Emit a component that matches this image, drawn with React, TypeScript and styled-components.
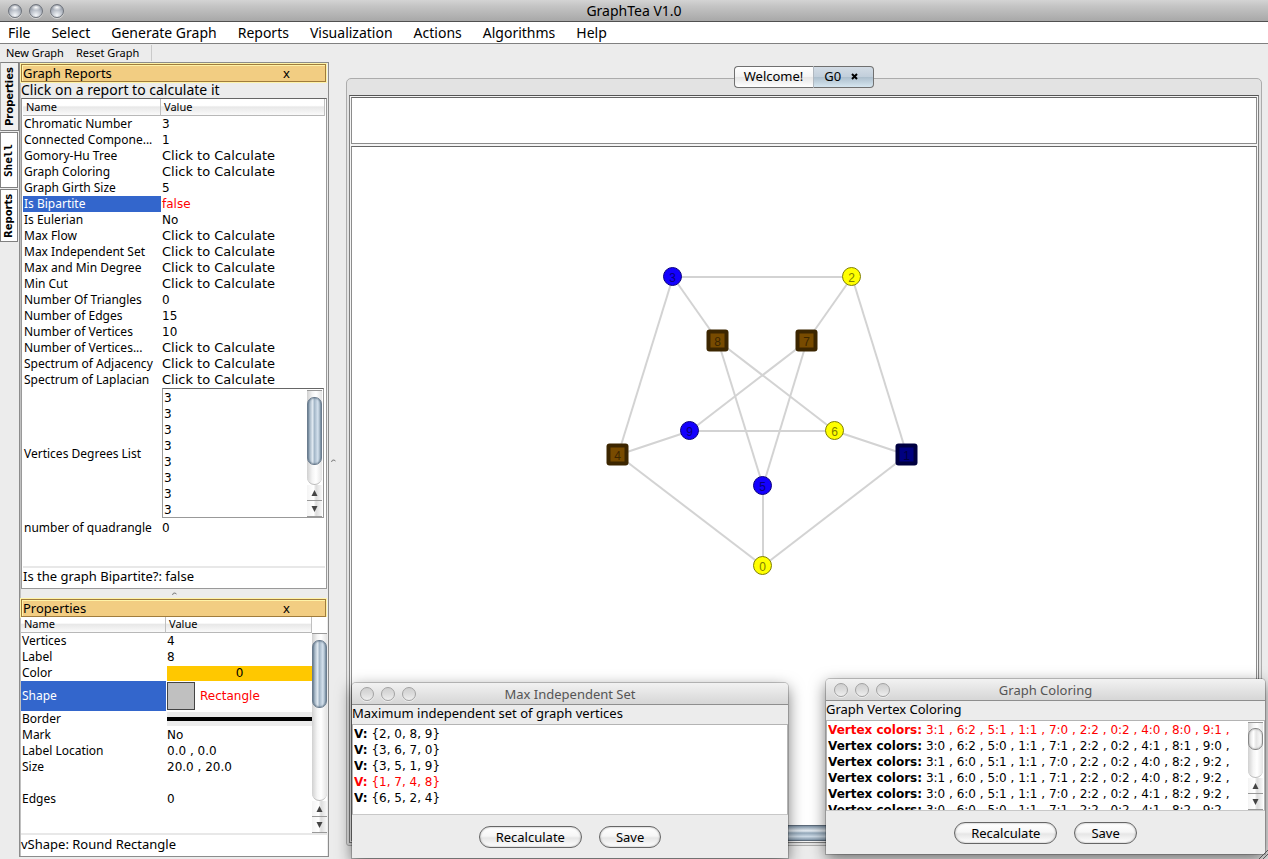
import React from "react";
import styled, { createGlobalStyle, css } from "styled-components";

const GlobalStyle = createGlobalStyle`
  * { box-sizing: border-box; }
  html, body { margin: 0; padding: 0; }
  body {
    background: #ececec;
    color: #000;
    font-family: "Noto Sans", "Open Sans", sans-serif;
    font-size: 13px;
    line-height: 16px;
  }
  button { font-family: inherit; color: inherit; margin: 0; padding: 0; border: 0; background: none; }
  ul { list-style: none; margin: 0; padding: 0; }
`;

const Window = styled.div`
  position: relative;
  display: flex;
  flex-direction: column;
  min-height: 100vh;
  overflow: hidden;
  background: #ececec;
`;

/* ---------- window chrome ---------- */

const TitleBar = styled.header`
  display: grid;
  grid-template-columns: 72px 1fr 80px;
  align-items: center;
  height: 22px;
  padding: 0 0 0 8px;
  border-bottom: 1px solid #505050;
  background: linear-gradient(#d4d4d4, #c4c4c4 30%, #a8a8a8);
`;

const WindowTitle = styled.h1`
  margin: 0;
  font-size: 14px;
  font-weight: 400;
  text-align: center;
`;

const Lights = styled.div`
  display: flex;
  gap: 7px;
`;

const Light = styled.button<{ $dim?: boolean }>`
  width: 14px;
  height: 14px;
  border-radius: 50%;
  border: 1px solid ${(p) => (p.$dim ? "#a2a2a2" : "#6f747c")};
  background: ${(p) =>
    p.$dim
      ? "linear-gradient(#cfcfcf, #dcdcdc 50%, #efefef)"
      : "radial-gradient(ellipse 5px 3px at 50% 20%, #fff, rgba(255,255,255,0) 100%), radial-gradient(circle at 50% 85%, #f4f7fa 0, #b4bac4 50%, #747b88 100%)"};
  box-shadow: 0 1px 0 rgba(255, 255, 255, 0.5);
`;

const MenuBar = styled.nav`
  display: flex;
  align-items: center;
  gap: 21px;
  height: 22px;
  padding: 0 8px;
  border-bottom: 1px solid #808080;
  background: #fff;
`;

const MenuItem = styled.button`
  font-size: 14px;
  line-height: 20px;
`;

const ToolBar = styled.div`
  display: flex;
  align-items: center;
  gap: 12px;
  height: 18px;
  padding-left: 6px;
`;

const ToolButton = styled.button`
  font-size: 11px;
  line-height: 16px;
`;

const ToolDivider = styled.span`
  width: 1px;
  height: 16px;
  background: #cacaca;
`;

const Body = styled.div`
  flex: 1;
  display: flex;
`;

/* ---------- left side ---------- */

const SideTabs = styled.div`
  flex: none;
  width: 19px;
  display: flex;
  flex-direction: column;
  align-items: flex-start;
  gap: 1px;
`;

const SideTab = styled.button<{ $size: number; $open?: boolean; $mono?: boolean }>`
  width: ${(p) => (p.$open ? 19 : 18)}px;
  height: ${(p) => p.$size}px;
  border: 1px solid #808080;
  border-right-color: ${(p) => (p.$open ? "#aaa" : "#808080")};
  background: ${(p) => (p.$open ? "#f0f0f0" : "#fff")};
  writing-mode: vertical-rl;
  transform: rotate(180deg);
  font-family: ${(p) => (p.$mono ? '"DejaVu Sans Mono", monospace' : '"DejaVu Sans", sans-serif')};
  font-size: ${(p) => (p.$mono ? 11 : 10)}px;
  line-height: 16px;
  font-weight: 700;
`;

const Sidebar = styled.aside`
  flex: none;
  width: 310px;
  margin-bottom: 2px;
  display: flex;
  flex-direction: column;
  border: 1px solid #8c8c8c;
  box-shadow: inset 1px 0 0 #c0c0c0;
  padding: 0 1px;
`;

const PanelHeader = styled.div`
  display: flex;
  justify-content: space-between;
  align-items: center;
  height: 18px;
  padding: 0 35px 0 1px;
  border: 1px solid #a07c3c;
  box-shadow: 0 0 0 1px #fff3a8, inset 1px 1px 0 #fff3a8;
  background: #f2cd82;
  margin: 1px 1px 0 0;
`;

const PanelTitle = styled.h2`
  margin: 0;
  font-size: 13px;
  font-weight: 400;
`;

const CloseButton = styled.button`
  font-size: 13px;
  line-height: 14px;
`;

const Hint = styled.p`
  margin: 0;
  height: 16px;
  font-size: 14px;
  line-height: 16px;
`;

const ReportBox = styled.div`
  display: flex;
  flex-direction: column;
  padding: 0 1px;
  border: 1px solid #999;
  border-top-color: #666;
  background: #fff;
`;

const Grid = styled.table`
  width: 100%;
  table-layout: fixed;
  border-collapse: separate;
  border-spacing: 0;
`;

const HeadCell = styled.th<{ $width?: number; $tall?: boolean }>`
  width: ${(p) => (p.$width ? p.$width + "px" : "auto")};
  height: ${(p) => (p.$tall ? 17 : 16)}px;
  padding: 0 0 1px 3px;
  border-right: 1px solid #c0c0c0;
  border-bottom: 1px solid #b8b8b8;
  background: linear-gradient(#fff 0, #fff 40%, #e8e8e8 50%, #fafafa 100%);
  font-size: 11px;
  line-height: 14px;
  font-weight: 400;
  text-align: left;
`;

const NameCell = styled.th<{ $selected?: boolean }>`
  height: 16px;
  padding: 0 0 0 1px;
  overflow: hidden;
  white-space: nowrap;
  font-size: 12px;
  font-weight: 400;
  line-height: 16px;
  text-align: left;
  ${(p) => p.$selected && css`background: #3366cc; color: #fff;`}
`;

const ValueCell = styled.td<{ $alert?: boolean; $action?: boolean }>`
  height: 16px;
  padding: 0 0 0 1px;
  font-family: "DejaVu Sans", sans-serif;
  font-size: ${(p) => (p.$action ? 13 : 12)}px;
  line-height: 16px;
  color: ${(p) => (p.$alert ? "#f00" : "inherit")};
`;

const StatusLine = styled.p`
  margin: 0;
  padding: 0;
  border-top: 2px solid #e8e8e8;
  height: 22px;
  font-size: 13px;
  line-height: 16px;
`;

const Spacer = styled.div<{ $size: number }>`
  height: ${(p) => p.$size}px;
`;

const DegreeBox = styled.div`
  display: flex;
  height: 130px;
  margin-right: 1px;
  margin-bottom: 2px;
  border: 1px solid #999;
  border-top-color: #666;
  padding: 1px 1px 0 1px;
`;

const DegreeList = styled.ul`
  flex: 1;
`;

const Splitter = styled.div`
  display: flex;
  justify-content: center;
  align-items: center;
  height: 9px;
`;

const PropertyTable = styled.div`
  display: flex;
  height: 216px;
  background: #fff;
`;

const PropertyColumn = styled.div`
  flex: 1;
`;

const BarColumn = styled.div`
  display: flex;
  padding-top: 16px;
`;

const Swatch = styled.div`
  height: 15px;
  line-height: 15px;
  background: #ffc800;
  text-align: center;
`;

const ShapeValue = styled.div`
  display: flex;
  align-items: center;
  gap: 5px;
  height: 30px;
`;

const ShapeChip = styled.span`
  width: 28px;
  height: 28px;
  border: 1px solid #444;
  background: #c0c0c0;
`;

const Stroke = styled.div`
  height: 14px;
  border: solid #ececec;
  border-width: 5px 0;
  background: #000;
`;

const PropertyStatus = styled(StatusLine)`
  flex: 1;
  background: #fff;
  padding: 1px 0 0;
`;

/* ---------- scroll bars ---------- */

const Bar = styled.div`
  flex: none;
  width: 15px;
  display: flex;
  flex-direction: column;
  border-top: 1px solid #999;
  background: #fff;
`;

const Track = styled.div<{ $offset: number }>`
  flex: 1;
  min-height: 0;
  padding-top: ${(p) => p.$offset}px;
  border-radius: 0 0 8px 8px;
  border-bottom: 1px solid #bbb;
  background: linear-gradient(90deg, #d0d0d0, #f4f4f4 35%, #fff 60%, #e4e4e4);
`;

const Thumb = styled.div<{ $size: number; $gray?: boolean }>`
  height: ${(p) => p.$size}px;
  border: 1px solid ${(p) => (p.$gray ? "#888" : "#6b7c8e")};
  border-radius: 7px;
  box-shadow: inset 0 0 2px ${(p) => (p.$gray ? "#999" : "#3f5468")};
  background: ${(p) =>
    p.$gray
      ? "linear-gradient(90deg, #ddd, #fff 35%, #e4e4e4 55%, #fff)"
      : "linear-gradient(90deg, #8298ab, #dfe8f0 35%, #a5b8c9 50%, #d3e0ec 75%, #8fa4b6)"};
`;

const Arrow = styled.button`
  display: flex;
  align-items: center;
  justify-content: center;
  height: 16px;
  border-bottom: 1px solid #999;
  background: linear-gradient(90deg, #f4f4f4, #fff 45%, #dcdcdc 60%, #f8f8f8);
`;

function ScrollBar({ offset, size, gray }: { offset: number; size: number; gray?: boolean }) {
  return (
    <Bar>
      <Track $offset={offset}>
        <Thumb $size={size} $gray={gray} />
      </Track>
      <Arrow aria-label="Scroll up">
        <svg width="7" height="6"><path d="M3.5 0 L6.5 6 H0.5 Z" fill="#444" /></svg>
      </Arrow>
      <Arrow aria-label="Scroll down">
        <svg width="7" height="6"><path d="M3.5 6 L6.5 0 H0.5 Z" fill="#444" /></svg>
      </Arrow>
    </Bar>
  );
}

/* ---------- right side ---------- */

const Gutter = styled.div`
  flex: none;
  width: 17px;
  display: flex;
  align-items: center;
  padding-left: 2px;
`;

const Workspace = styled.main`
  flex: 1;
  display: flex;
  flex-direction: column;
  margin: 4px 6px 13px 0;
`;

const TabRow = styled.div`
  z-index: 1;
  display: flex;
  justify-content: center;
  height: 22px;
  margin-bottom: -10px;
`;

const DocTab = styled.button<{ $active?: boolean }>`
  display: flex;
  align-items: center;
  gap: 10px;
  height: 22px;
  padding: ${(p) => (p.$active ? "0 15px 2px 10px" : "0 10px 2px 9px")};
  border: 1px solid #707070;
  font-size: 13px;
  line-height: 18px;
  ${(p) =>
    p.$active
      ? css`
          border-left: 1px solid #b0b8c0;
          border-radius: 0 4px 4px 0;
          background: linear-gradient(#d3dce5, #c2cfdb 48%, #adbfcd 52%, #d6e6f0);
        `
      : css`
          border-right: 0;
          border-radius: 4px 0 0 4px;
          background: linear-gradient(#fff, #f4f4f4 48%, #e6e6e6 52%, #fff);
        `}
`;

const Frame = styled.section`
  flex: 1;
  display: flex;
  flex-direction: column;
  padding: 16px 2px 2px;
  border: 1px solid #acacac;
  border-radius: 5px 5px 3px 3px;
  background: #e3e3e3;
`;

const InnerFrame = styled.div`
  flex: 1;
  display: flex;
  flex-direction: column;
  gap: 2px;
  padding: 1px;
  border: 1px solid #808080;
  border-top-color: #555;
  background: #f4f4f4;
`;

const NoteBox = styled.div`
  height: 47px;
  border: 1px solid #8c8c8c;
  border-top-color: #666;
  background: #fff;
`;

const CanvasBox = styled.div`
  flex: 1;
  display: flex;
  flex-direction: column;
  border: 1px solid #8c8c8c;
  border-top-color: #666;
  border-bottom: 0;
  background: #fff;
`;

const Drawing = styled.svg`
  display: block;
  flex: 1;
  width: 100%;
  font-family: "Liberation Sans", sans-serif;
  font-size: 12px;
`;

const HorizontalThumb = styled.div`
  height: 16px;
  border: 1px solid #5d6b7a;
  background: linear-gradient(#7c90a3, #e6edf3 35%, #93a8ba 50%, #cbd9e5 75%, #7f94a7);
`;

/* ---------- result windows ---------- */

const Dialog = styled.section<{ $left: number; $top: number; $width: number }>`
  position: absolute;
  left: ${(p) => p.$left}px;
  top: ${(p) => p.$top}px;
  width: ${(p) => p.$width}px;
  display: flex;
  flex-direction: column;
  background: #ececec;
  border-radius: 4px 4px 0 0;
  box-shadow: 0 0 0 1px rgba(0, 0, 0, 0.2), 0 5px 16px rgba(0, 0, 0, 0.55);
`;

const DialogBar = styled.header`
  display: grid;
  grid-template-columns: 62px 1fr 70px;
  align-items: center;
  height: 22px;
  padding-left: 8px;
  border-bottom: 1px solid #8e8e8e;
  border-radius: 4px 4px 0 0;
  background: linear-gradient(#f2f2f2, #d6d6d6);
`;

const DialogTitle = styled.h2`
  margin: 0;
  font-size: 13px;
  font-weight: 400;
  text-align: center;
  color: #555;
`;

const Caption = styled.p`
  margin: 0;
  height: 19px;
  font-size: 13px;
  line-height: 17px;
`;

const ResultBox = styled.div`
  display: flex;
  height: 91px;
  padding: 1px 1px 0 1px;
  border: 1px solid #b4b4b4;
  border-bottom-color: #c8c8c8;
  background: #fff;
  overflow: hidden;
`;

const ResultList = styled.ul`
  flex: 1;
  min-width: 0;
  height: 88px;
  overflow: hidden;
`;

const Result = styled.li<{ $alert?: boolean }>`
  height: 16px;
  font-family: "DejaVu Sans", sans-serif;
  font-size: 12px;
  line-height: 16px;
  white-space: nowrap;
  color: ${(p) => (p.$alert ? "#f00" : "inherit")};
`;

const DialogFooter = styled.footer`
  display: flex;
  justify-content: center;
  gap: 17px;
  padding: 11px 0 10px;
`;

const PillButton = styled.button`
  height: 22px;
  padding: 0 16px;
  border: 1px solid #666;
  border-radius: 11px;
  background: linear-gradient(#fff, #f6f6f6 45%, #e6e6e6 55%, #fff);
  box-shadow: inset 0 0 2px #999;
  font-size: 13px;
  line-height: 18px;
`;

const Grip = styled.svg`
  position: absolute;
  right: 0;
  bottom: 0;
`;

/* ---------- data ---------- */

const CALC = "Click to Calculate";
const reports: [string, string][] = [
  ["Chromatic Number", "3"],
  ["Connected Compone...", "1"],
  ["Gomory-Hu Tree", CALC],
  ["Graph Coloring", CALC],
  ["Graph Girth Size", "5"],
  ["Is Bipartite", "false"],
  ["Is Eulerian", "No"],
  ["Max Flow", CALC],
  ["Max Independent Set", CALC],
  ["Max and Min Degree", CALC],
  ["Min Cut", CALC],
  ["Number Of Triangles", "0"],
  ["Number of Edges", "15"],
  ["Number of Vertices", "10"],
  ["Number of Vertices...", CALC],
  ["Spectrum of Adjacency", CALC],
  ["Spectrum of Laplacian", CALC],
];

type Kind = "blue" | "yellow" | "brown" | "navy";
const vertices: { x: number; y: number; kind: Kind }[] = [
  { x: 411, y: 419, kind: "yellow" },
  { x: 555, y: 308, kind: "navy" },
  { x: 500, y: 130, kind: "yellow" },
  { x: 321, y: 130, kind: "blue" },
  { x: 266, y: 308, kind: "brown" },
  { x: 411, y: 339, kind: "blue" },
  { x: 483, y: 284, kind: "yellow" },
  { x: 455, y: 194, kind: "brown" },
  { x: 366, y: 194, kind: "brown" },
  { x: 338, y: 284, kind: "blue" },
];

const edges = [
  [3, 2], [3, 4], [2, 1], [4, 0], [1, 0], [3, 8], [2, 7], [4, 9],
  [1, 6], [0, 5], [8, 5], [8, 6], [7, 9], [7, 5], [9, 6],
];

const paint: Record<Kind, { fill: string; line: string; ink: string }> = {
  blue: { fill: "#1400ff", line: "#0a0080", ink: "#0a0080" },
  yellow: { fill: "#ffff00", line: "#808000", ink: "#808000" },
  brown: { fill: "#784b00", line: "#3c2600", ink: "#3c2600" },
  navy: { fill: "#000080", line: "#000040", ink: "#000040" },
};

const colorings = [
  "3:1 , 6:2 , 5:1 , 1:1 , 7:0 , 2:2 , 0:2 , 4:0 , 8:0 , 9:1 ,",
  "3:0 , 6:2 , 5:0 , 1:1 , 7:1 , 2:2 , 0:2 , 4:1 , 8:1 , 9:0 ,",
  "3:1 , 6:0 , 5:1 , 1:1 , 7:0 , 2:2 , 0:2 , 4:0 , 8:2 , 9:2 ,",
  "3:1 , 6:0 , 5:0 , 1:1 , 7:1 , 2:2 , 0:2 , 4:0 , 8:2 , 9:2 ,",
  "3:0 , 6:0 , 5:1 , 1:1 , 7:0 , 2:2 , 0:2 , 4:1 , 8:2 , 9:2 ,",
  "3:0 , 6:0 , 5:0 , 1:1 , 7:1 , 2:2 , 0:2 , 4:1 , 8:2 , 9:2 ,",
];

const independentSets = ["{2, 0, 8, 9}", "{3, 6, 7, 0}", "{3, 5, 1, 9}", "{1, 7, 4, 8}", "{6, 5, 2, 4}"];

/* ---------- parts ---------- */

function TrafficLights({ dim }: { dim?: boolean }) {
  return (
    <Lights>
      <Light $dim={dim} aria-label="Close" />
      <Light $dim={dim} aria-label="Minimize" />
      <Light $dim={dim} aria-label="Zoom" />
    </Lights>
  );
}

function Dimple() {
  return (
    <svg width="5" height="4" aria-hidden="true">
      <path d="M0.5 3 Q1 0.5 3 1 L4.5 2" fill="none" stroke="#777" />
    </svg>
  );
}

function GraphDrawing() {
  return (
    <Drawing role="img" aria-label="Petersen graph">
      {edges.map(([a, b]) => (
        <line
          key={`${a}-${b}`}
          x1={vertices[a].x}
          y1={vertices[a].y}
          x2={vertices[b].x}
          y2={vertices[b].y}
          stroke="#d3d3d3"
          strokeWidth="2"
        />
      ))}
      {vertices.map(({ x, y, kind }, i) => {
        const c = paint[kind];
        const round = kind === "blue" || kind === "yellow";
        return (
          <g key={i}>
            {round ? (
              <circle cx={x - 0.5} cy={y - 0.5} r="9" fill={c.fill} stroke={c.line} />
            ) : (
              <>
                <rect x={x - 11.5} y={y - 11.5} width="22" height="22" rx="3" fill={c.line} />
                <rect x={x - 7.5} y={y - 7.5} width="14" height="14" fill={c.fill} />
              </>
            )}
            <text x={x - 0.5} y={y + 5} textAnchor="middle" fill={c.ink}>{i}</text>
          </g>
        );
      })}
    </Drawing>
  );
}

function ReportsPanel() {
  return (
    <>
      <PanelHeader>
        <PanelTitle>Graph Reports</PanelTitle>
        <CloseButton aria-label="Close Graph Reports">x</CloseButton>
      </PanelHeader>
      <Hint>Click on a report to calculate it</Hint>
      <ReportBox>
        <Grid>
          <thead>
            <tr>
              <HeadCell $tall $width={138}>Name</HeadCell>
              <HeadCell $tall>Value</HeadCell>
            </tr>
          </thead>
          <tbody>
            {reports.map(([name, value]) => (
              <tr key={name}>
                <NameCell scope="row" $selected={name === "Is Bipartite"}>{name}</NameCell>
                <ValueCell $action={value === CALC} $alert={value === "false"}>{value}</ValueCell>
              </tr>
            ))}
            <tr>
              <NameCell scope="row">Vertices Degrees List</NameCell>
              <ValueCell>
                <DegreeBox>
                  <DegreeList>
                    {Array.from({ length: 8 }, (_, i) => <li key={i}>3</li>)}
                  </DegreeList>
                  <ScrollBar offset={6} size={68} />
                </DegreeBox>
              </ValueCell>
            </tr>
            <tr>
              <NameCell scope="row">number of quadrangle</NameCell>
              <ValueCell>0</ValueCell>
            </tr>
          </tbody>
        </Grid>
        <Spacer $size={30} />
        <StatusLine>Is the graph Bipartite?: false</StatusLine>
      </ReportBox>
    </>
  );
}

function PropertiesPanel() {
  return (
    <>
      <PanelHeader>
        <PanelTitle>Properties</PanelTitle>
        <CloseButton aria-label="Close Properties">x</CloseButton>
      </PanelHeader>
      <PropertyTable>
        <PropertyColumn>
          <Grid>
            <thead>
              <tr>
                <HeadCell $width={145}>Name</HeadCell>
                <HeadCell>Value</HeadCell>
              </tr>
            </thead>
            <tbody>
              <tr><NameCell scope="row">Vertices</NameCell><ValueCell>4</ValueCell></tr>
              <tr><NameCell scope="row">Label</NameCell><ValueCell>8</ValueCell></tr>
              <tr><NameCell scope="row">Color</NameCell><ValueCell><Swatch>0</Swatch></ValueCell></tr>
              <tr>
                <NameCell scope="row" $selected>Shape</NameCell>
                <ValueCell $alert><ShapeValue><ShapeChip />Rectangle</ShapeValue></ValueCell>
              </tr>
              <tr><NameCell scope="row">Border</NameCell><ValueCell><Stroke /></ValueCell></tr>
              <tr><NameCell scope="row">Mark</NameCell><ValueCell>No</ValueCell></tr>
              <tr><NameCell scope="row">Label Location</NameCell><ValueCell>0.0 , 0.0</ValueCell></tr>
              <tr><NameCell scope="row">Size</NameCell><ValueCell>20.0 , 20.0</ValueCell></tr>
              <tr><NameCell scope="row" /><ValueCell /></tr>
              <tr><NameCell scope="row">Edges</NameCell><ValueCell>0</ValueCell></tr>
            </tbody>
          </Grid>
        </PropertyColumn>
        <BarColumn>
          <ScrollBar offset={6} size={68} />
        </BarColumn>
      </PropertyTable>
      <PropertyStatus>vShape: Round Rectangle</PropertyStatus>
    </>
  );
}

function ResultWindow(props: {
  left: number;
  top: number;
  width: number;
  title: string;
  caption: string;
  children: React.ReactNode;
}) {
  return (
    <Dialog role="dialog" aria-label={props.title} $left={props.left} $top={props.top} $width={props.width}>
      <DialogBar>
        <TrafficLights dim />
        <DialogTitle>{props.title}</DialogTitle>
      </DialogBar>
      <Caption>{props.caption}</Caption>
      <ResultBox>{props.children}</ResultBox>
      <DialogFooter>
        <PillButton>Recalculate</PillButton>
        <PillButton>Save</PillButton>
      </DialogFooter>
    </Dialog>
  );
}

const menus = ["File", "Select", "Generate Graph", "Reports", "Visualization", "Actions", "Algorithms", "Help"];

export default function App() {
  return (
    <Window>
      <GlobalStyle />
      <TitleBar>
        <TrafficLights />
        <WindowTitle>GraphTea V1.0</WindowTitle>
      </TitleBar>
      <MenuBar>
        {menus.map((m) => <MenuItem key={m}>{m}</MenuItem>)}
      </MenuBar>
      <ToolBar>
        <ToolButton>New Graph</ToolButton>
        <ToolButton>Reset Graph</ToolButton>
        <ToolDivider />
      </ToolBar>
      <Body>
        <SideTabs>
          <SideTab $size={69} $open>Properties</SideTab>
          <SideTab $size={56} $mono>Shell</SideTab>
          <SideTab $size={53}>Reports</SideTab>
        </SideTabs>
        <Sidebar>
          <ReportsPanel />
          <Splitter><Dimple /></Splitter>
          <PropertiesPanel />
        </Sidebar>
        <Gutter><Dimple /></Gutter>
        <Workspace>
          <TabRow>
            <DocTab>Welcome!</DocTab>
            <DocTab $active>
              G0
              <svg width="7" height="7" aria-label="Close tab">
                <path d="M1 1 L6 6 M6 1 L1 6" stroke="#000" strokeWidth="2" />
              </svg>
            </DocTab>
          </TabRow>
          <Frame>
            <InnerFrame>
              <NoteBox />
              <CanvasBox>
                <GraphDrawing />
                <HorizontalThumb />
              </CanvasBox>
            </InnerFrame>
          </Frame>
        </Workspace>
      </Body>
      <ResultWindow
        left={352}
        top={683}
        width={436}
        title="Max Independent Set"
        caption="Maximum independent set of graph vertices"
      >
        <ResultList>
          {independentSets.map((s, i) => (
            <Result key={s} $alert={i === 3}><b>V:</b> {s}</Result>
          ))}
        </ResultList>
      </ResultWindow>
      <ResultWindow left={826} top={679} width={439} title="Graph Coloring" caption="Graph Vertex Coloring">
        <ResultList>
          {colorings.map((s, i) => (
            <Result key={s} $alert={i === 0}><b>Vertex colors:</b> {s}</Result>
          ))}
        </ResultList>
        <ScrollBar offset={5} size={22} gray />
      </ResultWindow>
      <Grip width="9" height="9" aria-hidden="true">
        <path d="M0 9 L9 0 M4 9 L9 4" stroke="#555" />
      </Grip>
    </Window>
  );
}
